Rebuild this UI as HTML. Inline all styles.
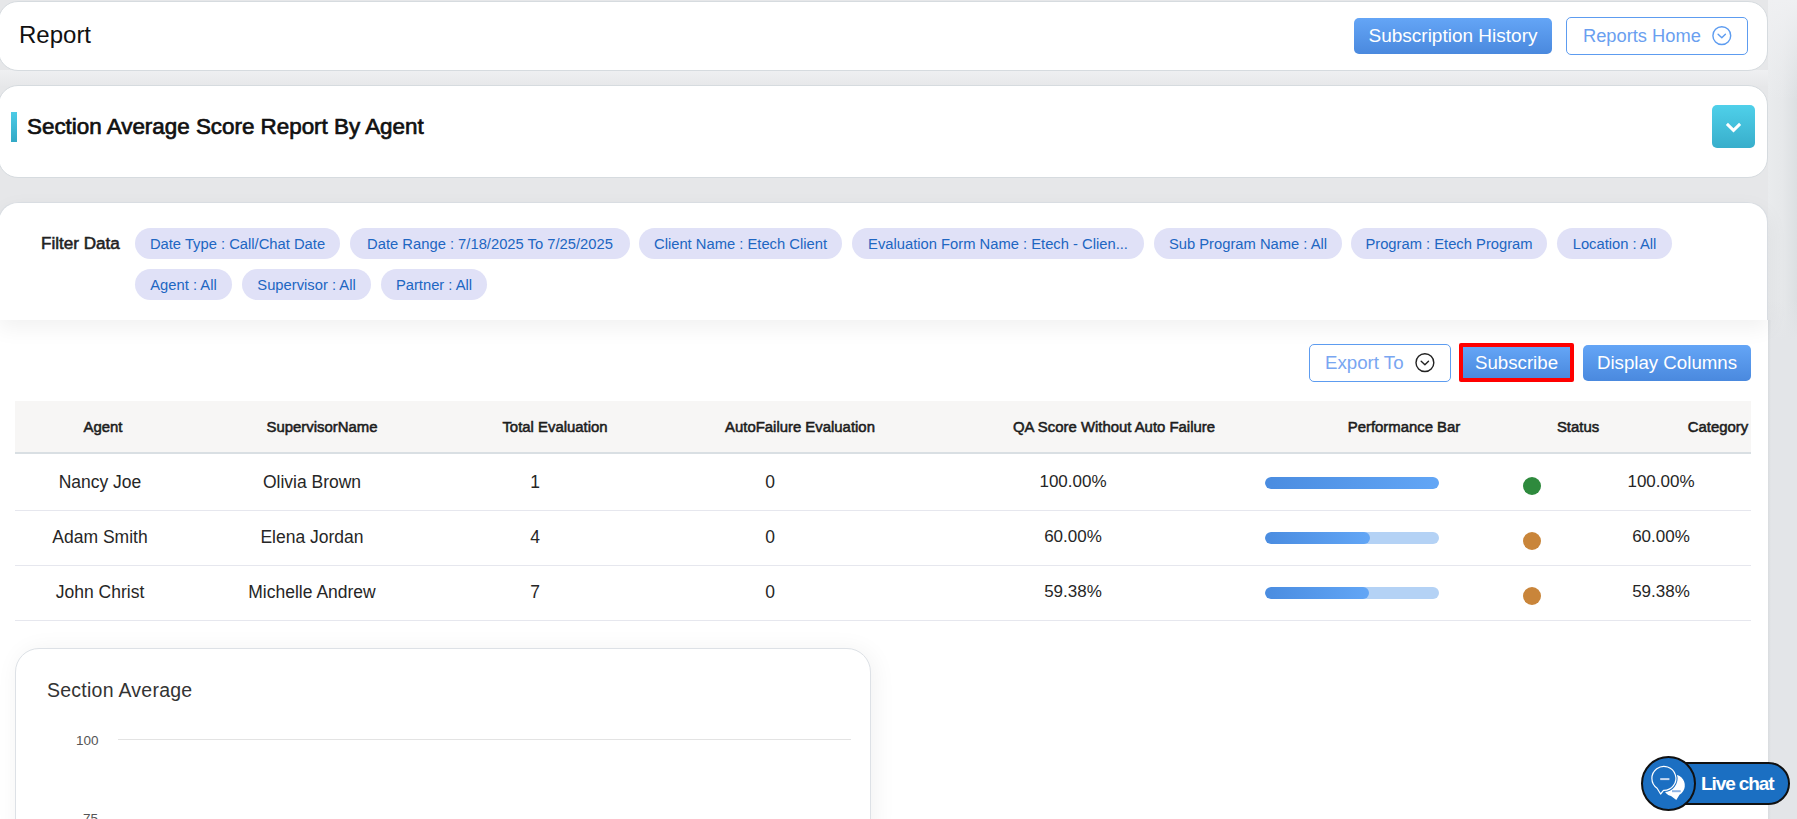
<!DOCTYPE html>
<html><head><meta charset="utf-8">
<style>
*{box-sizing:border-box;margin:0;padding:0}
html,body{width:1797px;height:819px;overflow:hidden}
body{background:#e6e7e9;font-family:"Liberation Sans",sans-serif;position:relative;color:#222}
.abs{position:absolute}
.card{position:absolute;background:#fff;border:1px solid #d6dbdf;border-radius:20px}
.btnblue{position:absolute;background:linear-gradient(180deg,#64a5f6 0%,#4a89de 100%);color:#fff;border-radius:5px;font-size:19px;display:flex;align-items:center;justify-content:center;white-space:nowrap}
.btnout{position:absolute;border:1px solid #5d9cf0;border-radius:5px;color:#6a9ff0;background:#fff;white-space:nowrap}
.chip{position:absolute;height:31px;border-radius:16px;background:#e0e1f7;color:#2066c2;font-size:14.75px;display:flex;align-items:center;justify-content:center;white-space:nowrap}
.th{position:absolute;top:400px;height:52px;font-weight:400;font-size:14.9px;-webkit-text-stroke:0.55px #1d1d1d;color:#1d1d1d;line-height:52px;white-space:nowrap;transform:translateX(-50%)}
.td{position:absolute;font-size:17.5px;color:#262626;white-space:nowrap;transform:translateX(-50%);line-height:20px}
.rowline{position:absolute;left:15px;width:1736px;height:1px;background:#e6e7ee}
.bar{position:absolute;left:1265px;width:174px;height:12px;border-radius:6px;background:#b4d2f5;overflow:hidden}
.bar i{position:absolute;left:0;top:0;bottom:0;border-radius:6px;background:linear-gradient(85deg,#4a8ce0,#62a6f6)}
.dot{position:absolute;left:1523px;width:18px;height:18px;border-radius:50%}
</style></head>
<body>
<!-- bg shading -->
<div class="abs" style="left:0;top:70px;width:1797px;height:16px;background:linear-gradient(180deg,#eff0f2,#e7e8ea)"></div>
<div class="abs" style="left:1768px;top:0;width:29px;height:819px;background:linear-gradient(180deg,rgba(239,240,242,1) 0,rgba(239,240,242,0) 100px),linear-gradient(90deg,#e9ebed 0,#e6e8ea 50%,#dcdfe2 100%)"></div>
<div class="abs" style="left:1768px;top:300px;width:29px;height:519px;background:linear-gradient(180deg,rgba(227,229,232,0) 0,#e3e5e8 40px)"></div>
<div class="abs" style="left:1768px;top:320px;width:3px;height:499px;background:linear-gradient(90deg,#d9dcdf,#e3e5e8)"></div>
<!-- Card 1 -->
<div class="card" style="left:-2px;top:1px;width:1770px;height:70px"></div>
<div class="abs" style="left:19px;top:20px;font-size:24px;line-height:30px;color:#111">Report</div>
<div class="btnblue" style="left:1354px;top:18px;width:198px;height:36px">Subscription History</div>
<div class="btnout" style="left:1566px;top:17px;width:182px;height:38px">
  <span class="abs" style="left:16px;top:8px;font-size:18.3px;line-height:20px">Reports Home</span>
  <svg class="abs" style="left:144px;top:7px" width="22" height="22" viewBox="0.2 0.35 22 22"><circle cx="11" cy="11" r="8.9" fill="none" stroke="#5d9cf0" stroke-width="1.4"/><path d="M7.3 9.6 L11 13.1 L14.6 9.6" fill="none" stroke="#5d9cf0" stroke-width="1.4" stroke-linecap="round" stroke-linejoin="round"/></svg>
</div>

<!-- Card 2 -->
<div class="card" style="left:-2px;top:85px;width:1770px;height:93px"></div>
<div class="abs" style="left:11px;top:112px;width:6px;height:30px;background:linear-gradient(180deg,#4ccbe6,#33a9c6)"></div>
<div class="abs" style="left:27px;top:114px;font-size:22.4px;-webkit-text-stroke:0.7px #111;line-height:26px;color:#111">Section Average Score Report By Agent</div>
<div class="abs" style="left:1712px;top:105px;width:43px;height:43px;border-radius:5px;background:linear-gradient(180deg,#4fd0ea,#38aecb)">
  <svg class="abs" style="left:11px;top:12px" width="21" height="21" viewBox="0 0 21 21"><path d="M3.9 6.9 L10.5 13.3 L17.1 6.9" fill="none" stroke="#fff" stroke-width="3" stroke-linecap="butt" stroke-linejoin="miter"/></svg>
</div>

<!-- Filter card + main area -->
<div class="abs" style="left:0;top:320px;width:1768px;height:499px;background:#fff"></div>
<div class="abs" style="left:-2px;top:202px;width:1770px;height:118px;background:#fff;border:1px solid #d9dde2;border-bottom:none;border-radius:20px 20px 0 0;box-shadow:0 8px 22px rgba(0,0,0,0.06)"></div>
<div class="abs" style="left:41px;top:234px;font-size:17.1px;-webkit-text-stroke:0.55px #222;line-height:20px;color:#222">Filter Data</div>
<div class="chip" style="left:135px;top:228px;width:205px">Date Type : Call/Chat Date</div>
<div class="chip" style="left:350px;top:228px;width:280px">Date Range : 7/18/2025 To 7/25/2025</div>
<div class="chip" style="left:639px;top:228px;width:203px">Client Name : Etech Client</div>
<div class="chip" style="left:852px;top:228px;width:292px">Evaluation Form Name : Etech - Clien...</div>
<div class="chip" style="left:1154px;top:228px;width:188px">Sub Program Name : All</div>
<div class="chip" style="left:1351px;top:228px;width:196px">Program : Etech Program</div>
<div class="chip" style="left:1557px;top:228px;width:115px">Location : All</div>
<div class="chip" style="left:135px;top:269px;width:97px">Agent : All</div>
<div class="chip" style="left:242px;top:269px;width:129px">Supervisor : All</div>
<div class="chip" style="left:381px;top:269px;width:106px">Partner : All</div>

<!-- action buttons -->
<div class="btnout" style="left:1309px;top:344px;width:142px;height:38px">
  <span class="abs" style="left:15px;top:8px;font-size:18.7px;line-height:20px;color:#79a6f1">Export To</span>
  <svg class="abs" style="left:104px;top:7px" width="22" height="22" viewBox="0.1 0.35 22 22"><circle cx="11" cy="11" r="8.9" fill="none" stroke="#222" stroke-width="1.4"/><path d="M7.3 9.6 L11 13.1 L14.6 9.6" fill="none" stroke="#222" stroke-width="1.4" stroke-linecap="round" stroke-linejoin="round"/></svg>
</div>
<div class="abs" style="left:1459px;top:343px;width:115px;height:39px;background:#ff0000;border-radius:2px"></div>
<div class="btnblue" style="left:1463px;top:347px;width:107px;height:31px;border-radius:0;font-size:18.7px">Subscribe</div>
<div class="btnblue" style="left:1583px;top:345px;width:168px;height:36px;font-size:18.7px">Display Columns</div>

<!-- table header -->
<div class="abs" style="left:15px;top:401px;width:1736px;height:53px;background:#f7f6f5;border-bottom:2px solid #d9dfe3"></div>
<div class="th" style="left:103px;top:401px">Agent</div>
<div class="th" style="left:322px;top:401px">SupervisorName</div>
<div class="th" style="left:555px;top:401px">Total Evaluation</div>
<div class="th" style="left:800px;top:401px">AutoFailure Evaluation</div>
<div class="th" style="left:1114px;top:401px">QA Score Without Auto Failure</div>
<div class="th" style="left:1404px;top:401px">Performance Bar</div>
<div class="th" style="left:1578px;top:401px">Status</div>
<div class="th" style="left:1718px;top:401px">Category</div>

<!-- rows -->
<div class="td" style="left:100px;top:472px">Nancy Joe</div>
<div class="td" style="left:312px;top:472px">Olivia Brown</div>
<div class="td" style="left:535px;top:472px">1</div>
<div class="td" style="left:770px;top:472px">0</div>
<div class="td" style="left:1073px;top:472px;font-size:17px">100.00%</div>
<div class="bar" style="top:477px"><i style="width:174px"></i></div>
<div class="dot" style="top:477px;background:#2e8a3d"></div>
<div class="td" style="left:1661px;top:472px;font-size:17px">100.00%</div>
<div class="rowline" style="top:510px"></div>

<div class="td" style="left:100px;top:527px">Adam Smith</div>
<div class="td" style="left:312px;top:527px">Elena Jordan</div>
<div class="td" style="left:535px;top:527px">4</div>
<div class="td" style="left:770px;top:527px">0</div>
<div class="td" style="left:1073px;top:527px;font-size:17px">60.00%</div>
<div class="bar" style="top:532px"><i style="width:105px"></i></div>
<div class="dot" style="top:532px;background:#c9853a"></div>
<div class="td" style="left:1661px;top:527px;font-size:17px">60.00%</div>
<div class="rowline" style="top:565px"></div>

<div class="td" style="left:100px;top:582px">John Christ</div>
<div class="td" style="left:312px;top:582px">Michelle Andrew</div>
<div class="td" style="left:535px;top:582px">7</div>
<div class="td" style="left:770px;top:582px">0</div>
<div class="td" style="left:1073px;top:582px;font-size:17px">59.38%</div>
<div class="bar" style="top:587px"><i style="width:104px"></i></div>
<div class="dot" style="top:587px;background:#c9853a"></div>
<div class="td" style="left:1661px;top:582px;font-size:17px">59.38%</div>
<div class="rowline" style="top:620px"></div>

<!-- chart card -->
<div class="abs" style="left:15px;top:648px;width:856px;height:200px;background:#fff;border:1px solid #dde1e6;border-radius:24px;box-shadow:3px 2px 24px rgba(0,0,0,0.06)"></div>
<div class="abs" style="left:47px;top:679px;font-size:19.5px;letter-spacing:0.25px;line-height:22px;color:#333">Section Average</div>
<div class="abs" style="left:76px;top:733px;font-size:13.5px;line-height:16px;color:#555">100</div>
<div class="abs" style="left:118px;top:739px;width:733px;height:1px;background:#e3e3e3"></div>
<div class="abs" style="left:83px;top:811px;font-size:13.5px;line-height:16px;color:#555">75</div>

<!-- live chat -->
<div class="abs" style="left:1660px;top:762px;width:130px;height:43px;border-radius:22px;background:#1b6fc2;border:2.5px solid #111"></div>
<div class="abs" style="left:1701px;top:773px;font-size:19px;font-weight:700;letter-spacing:-1.1px;color:#fff;line-height:22px">Live chat</div>
<div class="abs" style="left:1641px;top:756px;width:55px;height:55px;border-radius:50%;background:#1b6fc2;border:2.5px solid #111"></div>
<svg class="abs" style="left:1640px;top:755px" width="60" height="60" viewBox="1640 755 60 60">
  <path d="M1671 796 L1676.3 800 L1679.5 794.8 A11 11 0 1 0 1671 796 Z" fill="#fff"/>
  <path d="M1657.1 788.3 L1660.6 794 L1663.5 790.4 A12 12 0 1 0 1657.1 788.3 Z" fill="#1b6fc2" stroke="#1b6fc2" stroke-width="3.2" stroke-linejoin="round"/>
  <path d="M1657.1 788.3 L1660.6 794 L1663.5 790.4 A12 12 0 1 0 1657.1 788.3 Z" fill="none" stroke="#fff" stroke-width="1.2" stroke-linejoin="round"/>
  <path d="M1660.2 779.1 H1669.4" stroke="#c5d7f0" stroke-width="2"/>
  <path d="M1672 791.2 H1680.7" stroke="#8fb4e4" stroke-width="2"/>
</svg>
</body></html>
